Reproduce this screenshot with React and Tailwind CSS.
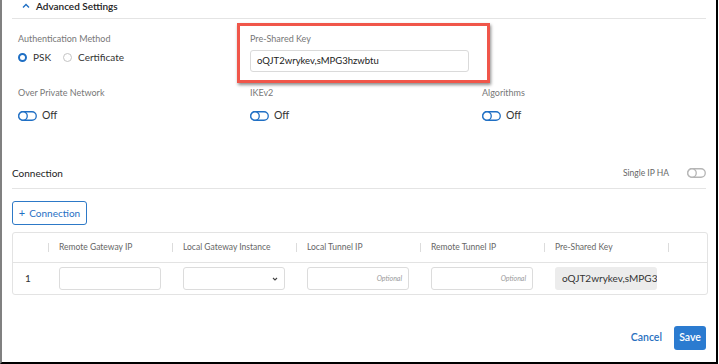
import React from "react";

const BLUE = "#1f6fc4";

const Toggle = ({ on = true }) => (
  <svg width="19" height="10" viewBox="0 0 19 10" className="shrink-0">
    <rect x="0.75" y="0.75" width="17.5" height="8.5" rx="4.25" fill="white" stroke={on ? BLUE : "#b5b5b5"} strokeWidth="1.3" />
    <circle cx="5" cy="5" r="4.25" fill="white" stroke={on ? BLUE : "#b5b5b5"} strokeWidth="1.3" />
  </svg>
);

const Label = ({ children }) => (
  <div className="h-[14px] text-[9px] leading-[14px] text-[#777]">{children}</div>
);

const OffToggle = () => (
  <div className="mt-[8px] flex h-[16px] items-center gap-[5px] text-[10.5px] text-[#333]">
    <Toggle />
    <span>Off</span>
  </div>
);

const columns = [
  "Remote Gateway IP",
  "Local Gateway Instance",
  "Local Tunnel IP",
  "Remote Tunnel IP",
  "Pre-Shared Key",
];

const App = () => {
  return (
    <div
      className="h-[364px] w-[719px] overflow-hidden bg-white"
      style={{ fontFamily: "Lato, 'Open Sans', sans-serif" }}
    >
      <div className="h-[364px] w-[718px] border-b-2 border-l-2 border-r-2 border-b-black border-l-[#808080] border-r-black px-[10px]">
        {/* Advanced settings header */}
        <div className="flex h-[19px] items-start border-b border-[#e4e4e4]">
          <div className="flex items-center">
            <svg width="8" height="6" viewBox="0 0 8 6" className="ml-[10px] mr-[6px]">
              <path d="M1 4.5 L4 1.5 L7 4.5" fill="none" stroke={BLUE} strokeWidth="1.4" />
            </svg>
            <span className="text-[10px] font-semibold leading-[12px] text-[#222]">Advanced Settings</span>
          </div>
        </div>

        {/* Row 1 */}
        <div className="grid h-[67px] grid-cols-[232px_232px_1fr] pl-[6px] pt-[13px]">
          <div>
            <Label>Authentication Method</Label>
            <div className="mt-[3px] flex h-[16px] items-center text-[10px] text-[#333]">
              <span className="h-[9px] w-[9px] rounded-full border-[2.5px] border-[#1f6fc4] bg-white" />
              <span className="ml-[6px]">PSK</span>
              <span className="ml-[12px] h-[9px] w-[9px] rounded-full border border-[#c4c4c4] bg-white" />
              <span className="ml-[6px]">Certificate</span>
            </div>
          </div>
          <div className="relative">
            <div className="absolute -left-[13px] -top-[9px] h-[60px] w-[253px] border-[3px] border-[#f0564a] shadow-[1px_2px_3px_rgba(0,0,0,0.45)]" />
            <Label>Pre-Shared Key</Label>
            <div className="mt-[4px] flex h-[22px] w-[219px] items-center rounded-[3px] border border-[#dadada] bg-white pl-[6px] text-[9.5px] text-[#222]">
              oQJT2wrykev,sMPG3hzwbtu
            </div>
          </div>
          <div />
        </div>

        {/* Row 2 */}
        <div className="grid h-[47px] grid-cols-[232px_232px_1fr] pl-[6px]">
          <div>
            <Label>Over Private Network</Label>
            <OffToggle />
          </div>
          <div>
            <Label>IKEv2</Label>
            <OffToggle />
          </div>
          <div>
            <Label>Algorithms</Label>
            <OffToggle />
          </div>
        </div>

        {/* Connection header */}
        <div className="mt-[33px] flex h-[23px] items-start justify-between border-b border-[#e4e4e4]">
          <span className="text-[10px] leading-[14px] text-[#222]">Connection</span>
          <div className="flex h-[14px] items-center">
            <span className="text-[8.5px] text-[#666]">Single IP HA</span>
            <span className="ml-[18px]">
              <Toggle on={false} />
            </span>
          </div>
        </div>

        <button className="mt-[12px] flex h-[24px] w-[75px] items-center justify-center gap-[4px] rounded-[3px] border border-[#2d79c7] text-[10px] text-[#1f6fc4]">
          <span className="text-[11px]">+</span>
          <span>Connection</span>
        </button>

        {/* Table */}
        <div className="mt-[7px] w-[696px] rounded-[3px] border border-[#e3e3e3]">
          <div className="flex h-[30px] items-center border-b border-[#e3e3e3]">
            <div className="w-[35px]" />
            {columns.map((c) => (
              <div key={c} className="flex w-[124px] items-center">
                <span className="h-[9px] w-px bg-[#dcdcdc]" />
                <span className="ml-[10px] text-[8.5px] text-[#666]">{c}</span>
              </div>
            ))}
            <span className="h-[9px] w-px bg-[#dcdcdc]" />
          </div>
          <div className="flex h-[31px] items-center">
            <div className="w-[35px] pl-[12px] text-[10px] text-[#333]">1</div>
            <div className="w-[124px] pl-[11px]">
              <div className="h-[23px] w-[102px] rounded-[3px] border border-[#dcdcdc]" />
            </div>
            <div className="w-[124px] pl-[11px]">
              <div className="flex h-[23px] w-[102px] items-center justify-end rounded-[3px] border border-[#dcdcdc] pr-[6px]">
                <svg width="6" height="4" viewBox="0 0 6 4">
                  <path d="M1 1 L3 3 L5 1" fill="none" stroke="#444" strokeWidth="1.1" />
                </svg>
              </div>
            </div>
            {[0, 1].map((i) => (
              <div key={i} className="w-[124px] pl-[11px]">
                <div className="flex h-[23px] w-[102px] items-center justify-end rounded-[3px] border border-[#dcdcdc] pr-[6px] text-[7px] italic text-[#9a9a9a]">
                  Optional
                </div>
              </div>
            ))}
            <div className="w-[124px] pl-[11px]">
              <div className="flex h-[23px] w-[102px] items-center overflow-hidden whitespace-nowrap rounded-[3px] bg-[#ececec] pl-[7px] text-[10px] text-[#333]">
                oQJT2wrykev,sMPG3
              </div>
            </div>
          </div>
        </div>

        {/* Footer */}
        <div className="mt-[31px] flex items-center justify-end gap-[12px]">
          <span className="text-[10.5px] font-semibold text-[#2870c0]">Cancel</span>
          <button className="h-[24px] w-[32px] rounded-[3px] bg-[#2b7bd0] text-[10.5px] font-semibold text-white">
            Save
          </button>
        </div>
      </div>
    </div>
  );
};

export default App;
